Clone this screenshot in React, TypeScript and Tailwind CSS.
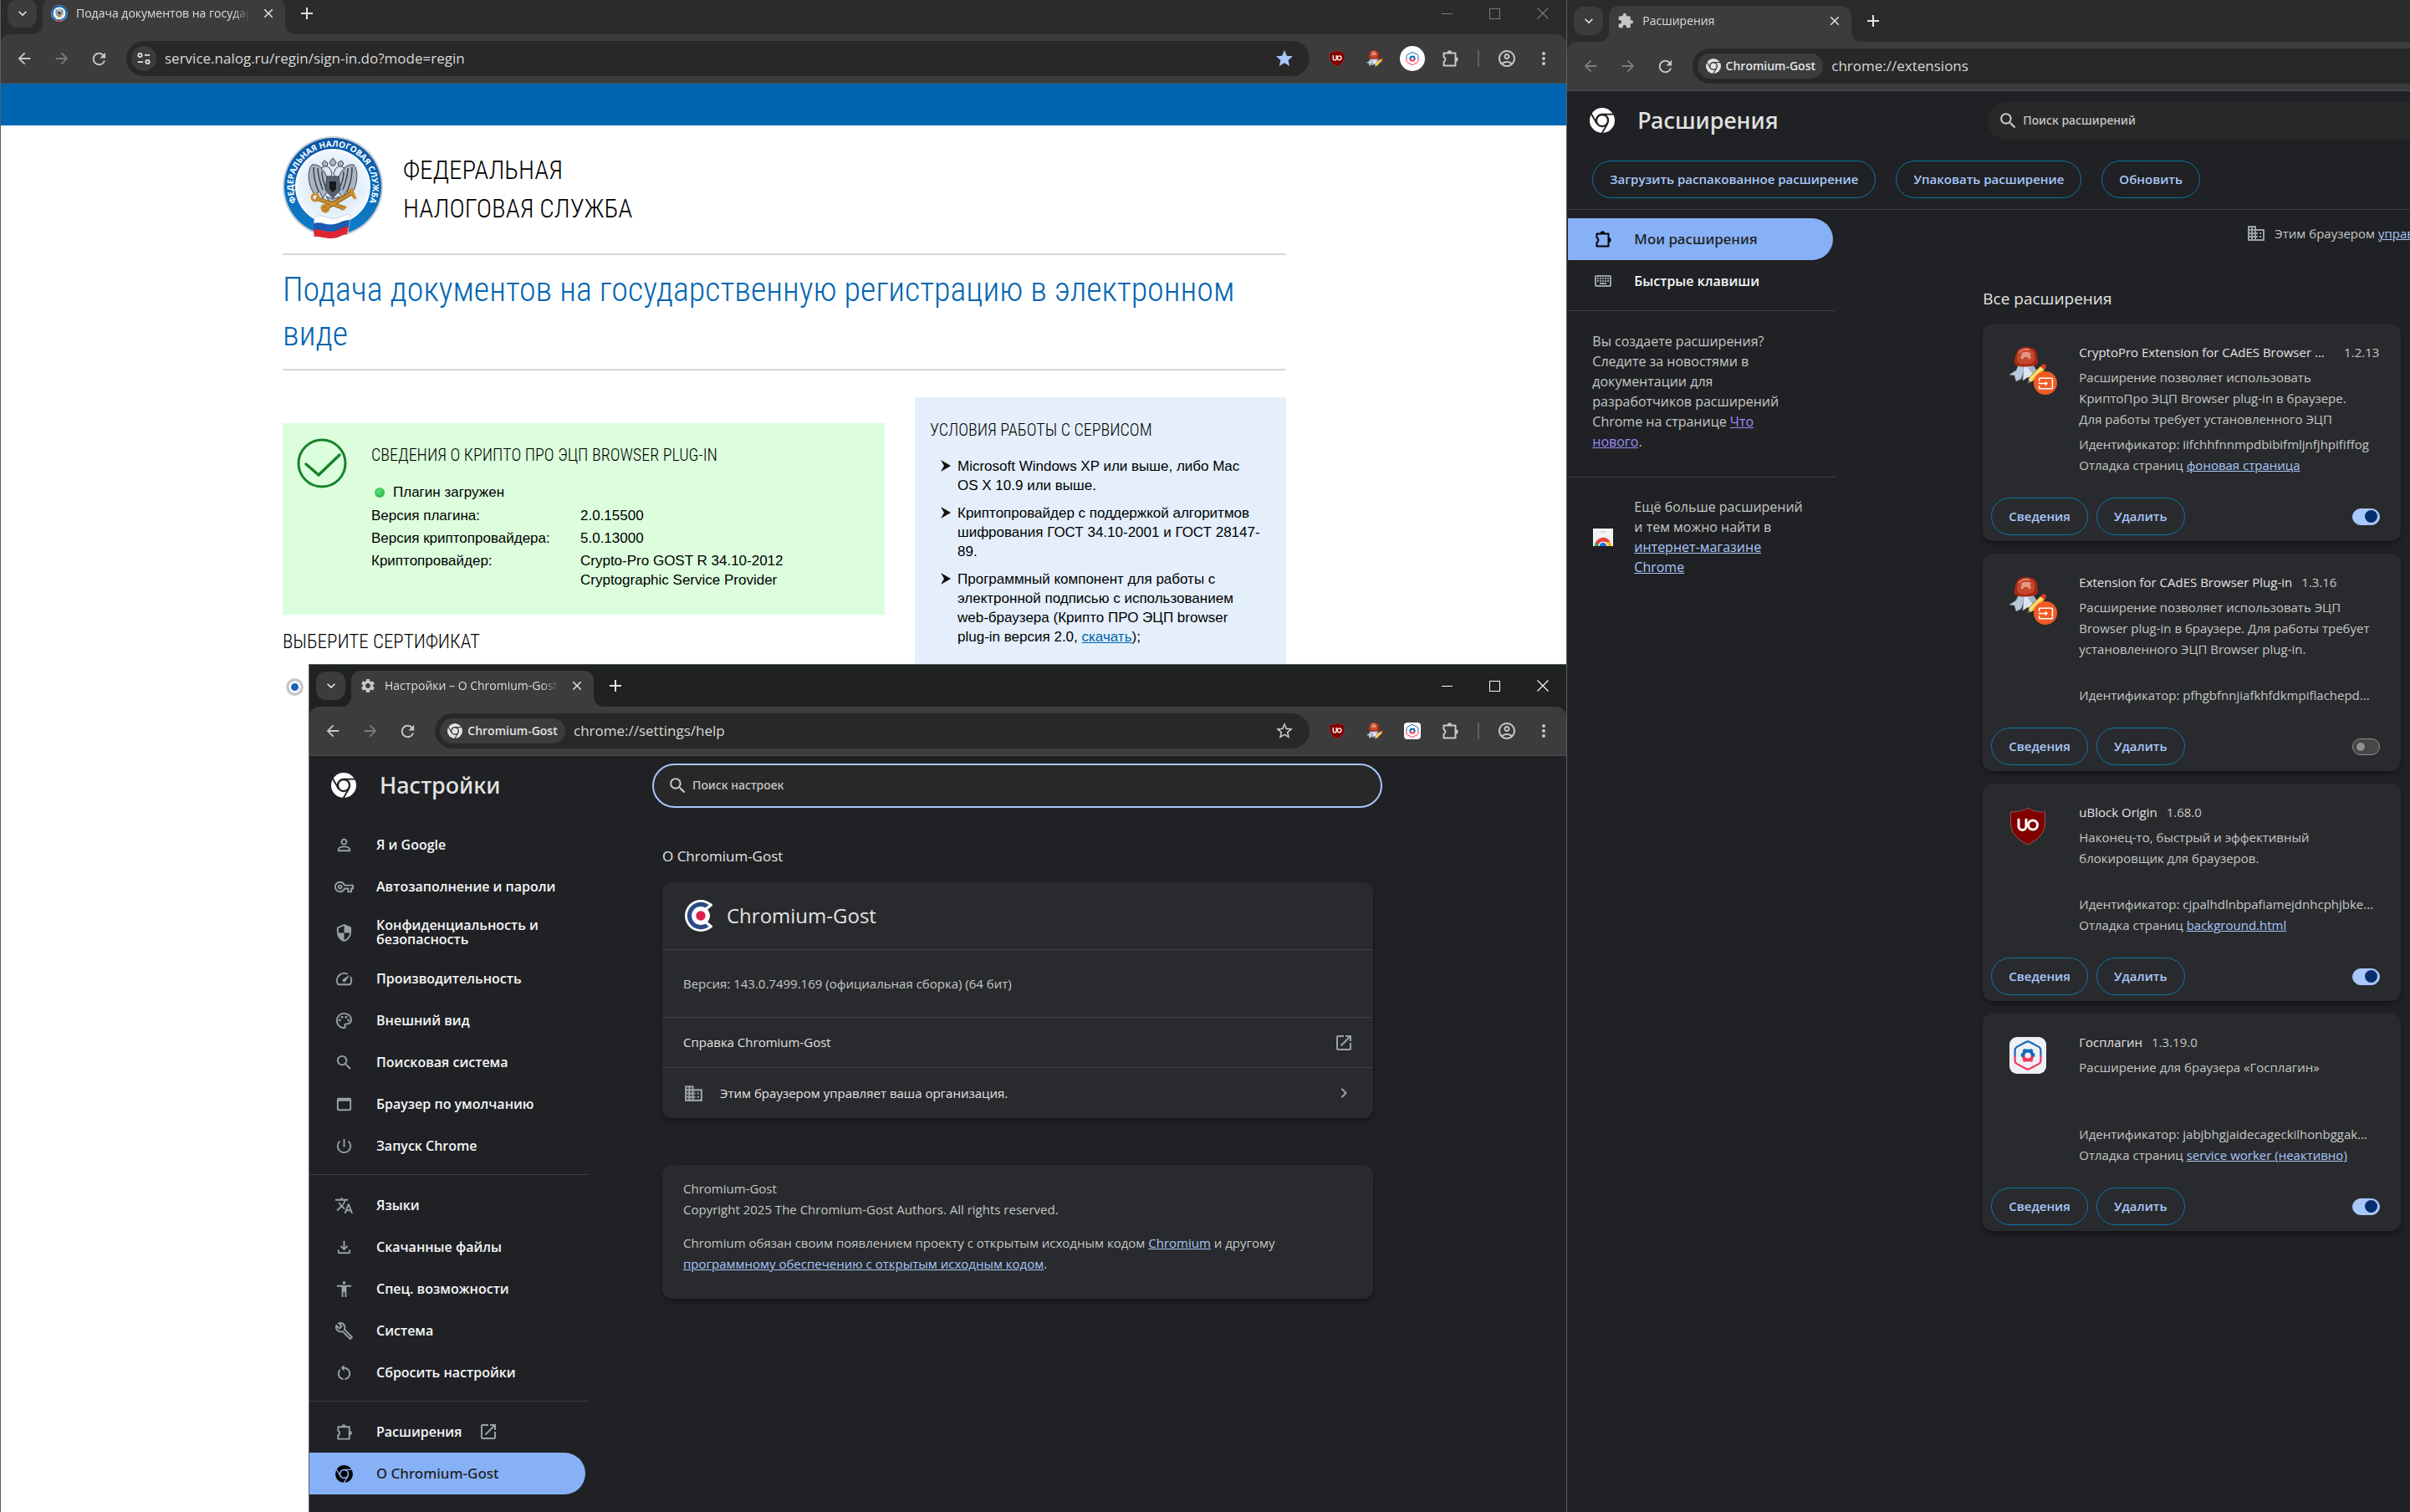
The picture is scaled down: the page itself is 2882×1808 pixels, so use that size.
import React from 'react';
import {
  MdAccessibility,
  MdAdd,
  MdArrowBack,
  MdArrowForward,
  MdBusiness,
  MdChevronRight,
  MdClose,
  MdExtension,
  MdInput,
  MdKeyboardArrowDown,
  MdMoreVert,
  MdOpenInNew,
  MdOutlineAccountCircle,
  MdOutlineBuild,
  MdOutlineFileDownload,
  MdOutlineKeyboard,
  MdOutlinePalette,
  MdOutlineSpeed,
  MdOutlineVpnKey,
  MdOutlineWebAsset,
  MdPersonOutline,
  MdPowerSettingsNew,
  MdRefresh,
  MdRestartAlt,
  MdSearch,
  MdSecurity,
  MdSettings,
  MdStar,
  MdStarBorder,
  MdTranslate,
} from 'react-icons/md';

type IconProps = { className?: string };

/* ---------- drawings ---------- */

function ChromeMark({ className }: IconProps) {
  return (
    <svg viewBox="0 0 24 24" className={className} aria-hidden="true">
      <mask id="chromeBlades" maskUnits="userSpaceOnUse" x="0" y="0" width="24" height="24">
        <circle cx="12" cy="12" r="12" fill="#fff" />
        <circle cx="12" cy="12" r="6.600" fill="#000" />
        <g stroke="#000" strokeWidth="1.500">
          <path d="M12 6.100h12" />
          <path d="M12 6.100h12" transform="rotate(120 12 12)" />
          <path d="M12 6.100h12" transform="rotate(240 12 12)" />
        </g>
        <circle cx="12" cy="12" r="4.700" fill="#fff" />
      </mask>
      <rect width="24" height="24" fill="currentColor" mask="url(#chromeBlades)" />
    </svg>
  );
}

function PuzzleOutline({ className }: IconProps) {
  return (
    <svg viewBox="0 0 24 24" className={className} aria-hidden="true">
      <path
        d="M4.5 5.5h14v15h-14v-4.6a3 3 0 0 0 0-5.6z"
        fill="none"
        stroke="currentColor"
        strokeWidth="2"
        strokeLinejoin="round"
      />
      <path d="M8.8 5a2.7 2.7 0 0 1 5.4 0zM19 10.3a2.7 2.7 0 0 1 0 5.4z" fill="currentColor" />
    </svg>
  );
}

function SiteControls({ className }: IconProps) {
  return (
    <svg viewBox="0 0 20 20" fill="none" stroke="currentColor" strokeWidth="2" className={className} aria-hidden="true">
      <circle cx="5" cy="5.5" r="2.4" />
      <path d="M11 5.5h7M2 14.5h7" />
      <circle cx="15" cy="14.5" r="2.4" />
    </svg>
  );
}

function UblockShield({ className }: IconProps) {
  return (
    <svg viewBox="0 0 44 46" className={className} aria-hidden="true">
      <path
        d="M22 1c6 4 13 5 20.500 5v13c0 12-8 20-20.500 26C9.500 39 1.500 31 1.500 19V6C9 6 16 5 22 1z"
        fill="#800000"
        stroke="#8a5a5a"
        strokeWidth="1"
      />
      <path d="M11 15v8a4.500 4.500 0 0 0 9 0v-8" fill="none" stroke="#fff" strokeWidth="3" strokeLinecap="round" />
      <circle cx="28" cy="21.500" r="5.500" fill="none" stroke="#fff" strokeWidth="3" />
    </svg>
  );
}

function SealIcon({ className }: IconProps) {
  return (
    <svg viewBox="0 0 44 44" className={className} aria-hidden="true">
      <path d="M11 21 8 28 0 33l6 1 2 7 6-3 5-15z" fill="#b9c9dc" stroke="#8394a8" strokeWidth=".6" />
      <path d="M17 22l-1 18 6-4 7 2-1-16z" fill="#dbe6f2" stroke="#8394a8" strokeWidth=".6" />
      <path d="M29 22l6 10-5 3-8-10z" fill="#a3b4c8" />
      <path d="M12 2c5-3 12-2 17 0 3 2 4 5 4 10 1 5 2 7-1 9-5 3-14 3-21 2-4-1-6-3-5-7 1-6 2-11 6-14z" fill="#a52a14" />
      <path d="M13 4c5-2 10-2 14 0 3 2 3 5 3 9 0 3-1 5-3 6-5 2-10 2-14 1-3-1-4-3-4-6 0-4 1-8 4-10z" fill="#c4472c" />
      <path d="M14 8c3-3 9-3 12 0l-2 2 2 2-2 3-2-3h-4l-3 3-2-3 2-2z" fill="#e29a84" />
      <path d="M11 7c2-4 8-5 13-4" fill="none" stroke="#ef9b83" strokeWidth="1.500" />
      <path d="M22 43l2-7L37 23l5 4-13 13z" fill="#f2c73a" stroke="#a67c12" strokeWidth=".8" />
      <path d="M25 38l14-13" stroke="#fbe796" strokeWidth="1.800" />
      <path d="M22 43l2-6 4 3z" fill="#ecd8b0" />
      <path d="M22 43l1-3 2 1.500z" fill="#333" />
      <path d="M37 23l2-2c3-2 6 1 5 3l-2 3z" fill="#d63d2c" />
    </svg>
  );
}

function GosMark({ className }: IconProps) {
  return (
    <svg viewBox="0 0 40 40" className={className} aria-hidden="true">
      <defs>
        <linearGradient id="gos" x1="0" y1="0" x2="0" y2="1">
          <stop offset="0" stopColor="#0c6cb8" />
          <stop offset=".48" stopColor="#2b63ae" />
          <stop offset=".56" stopColor="#e8385f" />
          <stop offset="1" stopColor="#f4365c" />
        </linearGradient>
      </defs>
      <path
        d="M18 5.500a4 4 0 0 1 4 0l10 5.300a4 4 0 0 1 2 3.500v11.400a4 4 0 0 1-2 3.500L22 34.500a4 4 0 0 1-4 0L8 29.200a4 4 0 0 1-2-3.500V14.300a4 4 0 0 1 2-3.500z"
        fill="none"
        stroke="url(#gos)"
        strokeWidth="2"
      />
      <circle cx="20" cy="20" r="5" fill="none" stroke="url(#gos)" strokeWidth="3.500" />
      <path d="M15.500 13.500l2 3M24.500 13.500l-2 3M12.500 19.500h3M24.500 19.500h3" stroke="#0c6cb8" strokeWidth="3.500" />
      <path d="M15.500 26.500l2-3M24.500 26.500l-2-3" stroke="#f4365c" strokeWidth="3.500" />
    </svg>
  );
}

function GostLogo({ className }: IconProps) {
  return (
    <svg viewBox="0 0 40 40" className={className} aria-hidden="true">
      <circle cx="20" cy="20" r="20" fill="#fff" />
      <circle cx="20" cy="20" r="17" fill="#2d4a86" />
      <path d="M20 20 44 -2v44z" fill="#292a2d" />
      <path d="M34 5.500 25 13v14l9 7.500" fill="none" stroke="#fff" strokeWidth="3.500" strokeLinejoin="round" />
      <circle cx="20" cy="20" r="11.500" fill="#fff" />
      <circle cx="20" cy="20" r="6" fill="#dc1f4b" />
    </svg>
  );
}

function StoreIcon({ className }: IconProps) {
  return (
    <svg viewBox="0 0 24 21" className={className} aria-hidden="true">
      <path d="M0 0h24v21H0z" fill="#f1f3f4" />
      <rect x="8" y="3" width="8" height="2" rx="1" fill="#dadce0" />
      <path d="M2 21a10 10 0 0 1 19-4.500H12z" fill="#ea4335" />
      <path d="M12 16.500h9A10 10 0 0 1 22 21H12z" fill="#fbbc04" />
      <path d="M2 21c0-2 .4-3.500 1.300-5L8 21z" fill="#34a853" />
      <circle cx="12" cy="21" r="5.500" fill="#fff" />
      <circle cx="12" cy="21" r="4.300" fill="#1a73e8" />
    </svg>
  );
}

function TaxEmblem({ className, lettered }: IconProps & { lettered?: boolean }) {
  return (
    <svg viewBox="0 0 120 122" className={className} aria-hidden="true">
      <defs>
        <radialGradient id="disc">
          <stop offset="0" stopColor="#cfe0f4" />
          <stop offset="1" stopColor="#edf5fd" />
        </radialGradient>
        <linearGradient id="ring" x1="0" y1="0" x2="0" y2="1">
          <stop offset="0" stopColor="#0b55a6" />
          <stop offset="1" stopColor="#0d7fcb" />
        </linearGradient>
        <path id="ringText" d="M24 91A47.500 47.500 0 1 1 96 91" />
      </defs>
      <circle cx="60" cy="60" r="60" fill="#c9ccd2" />
      <circle cx="60" cy="60" r="58" fill="url(#ring)" />
      <circle cx="60" cy="60" r="45" fill="#fff" />
      <circle cx="60" cy="60" r="43" fill="url(#disc)" />
      {lettered && (
        <text fontFamily="Open Sans, sans-serif" fontSize="10" fontWeight="700" fill="#fff">
          <textPath href="#ringText" startOffset="50%" textAnchor="middle">
            ФЕДЕРАЛЬНАЯ НАЛОГОВАЯ СЛУЖБА
          </textPath>
        </text>
      )}
      <g fill="#aab4c2" stroke="#3b424d" strokeWidth="1">
        <path d="M54 46c-6-9-13-13-19-12-5 6-5 18-1 28l4 8 6-4 4 8 6-8z" />
        <path d="M66 46c6-9 13-13 19-12 5 6 5 18 1 28l-4 8-6-4-4 8-6-8z" />
        <path d="M37 37c0 10 2 20 6 29M42 38c0 9 3 18 6 26M47 42c0 8 2 14 5 20M83 37c0 10-2 20-6 29M78 38c0 9-3 18-6 26M73 42c0 8-2 14-5 20" fill="none" strokeWidth="1.500" />
        <path d="M55 52c-4-5-4-11-9-13l4-4c5 0 8 5 9 10zM65 52c4-5 4-11 9-13l-4-4c-5 0-8 5-9 10z" fill="#dfe5ec" />
        <path d="M60 26l-4 5 2 4h4l2-4zM50 29l-3 3 2 4h4l1-4zM70 29l-4 3 1 4h4l2-4z" />
        <path d="M53 48h14l2 16-9 10-9-10z" fill="#59616d" />
      </g>
      <path d="M56 54h8v9l-4 4-4-4z" fill="#15181d" />
      <path d="M52 72l8 12 8-12-8 3z" fill="#aab4c2" stroke="#3b424d" />
      <g fill="none" stroke="#8a5a10" strokeWidth="5">
        <path d="M40 74l34 12M48 88l34-20" />
      </g>
      <g fill="none" stroke="#c98d2e" strokeWidth="3">
        <path d="M40 74l34 12M48 88l34-20" />
        <circle cx="39" cy="73" r="4" />
        <circle cx="51" cy="86" r="4" />
        <path d="M79 64l7 10M82 62l5 13M70 88l6-4" />
      </g>
      <path d="M38 96c10-4 16 4 26 2s11-6 17-4l-3 22c-8 1-9 5-19 7-9 1-14-4-22-3z" fill="#fff" stroke="#c5ccd6" strokeWidth=".8" />
      <path d="M37 104c10-3 15 3 25 1 8-2 11-5 18-5l-1 9c-7 0-9 4-19 6-9 1-14-3-23-2z" fill="#1b5bb2" />
      <path d="M37 112c9-2 14 3 23 2 9-2 11-6 19-6l-2 9c-7 0-8 4-17 5-9 1-14-3-22-2z" fill="#e02430" />
    </svg>
  );
}

function CheckCircle({ className }: IconProps) {
  return (
    <svg viewBox="0 0 60 60" fill="none" stroke="#16832b" strokeWidth="3" strokeLinecap="round" className={className} aria-hidden="true">
      <circle cx="30" cy="30" r="28" />
      <path d="M11 31l15 13 25-24" strokeWidth="3.500" />
    </svg>
  );
}

function ListArrow({ className }: IconProps) {
  return (
    <svg viewBox="0 0 12 14" fill="#111" className={className} aria-hidden="true">
      <path d="M0 0l12 7-12 7 4-7z" />
    </svg>
  );
}

/* ---------- browser frame ---------- */

type FrameProps = {
  className: string;
  strip: string;
  controlTone?: string;
  tabIcon: React.ReactNode;
  tabTitle: string;
  chip?: boolean;
  url: string;
  starred?: boolean;
  circledGos?: boolean;
  fullBar?: boolean;
  backMuted?: boolean;
  children: React.ReactNode;
};

function BrowserWindow(p: FrameProps) {
  return (
    <section className={`flex flex-col overflow-hidden border-l border-[#566066] ${p.className}`}>
      <header className="shrink-0 bg-[#3c3c3c]">
        <div className="flex h-[50px]">
          <div className={`w-[50px] shrink-0 rounded-br-xl pt-2 pl-2 ${p.strip}`}>
            <button type="button" aria-label="Поиск вкладок" className="flex h-[34px] w-[35px] items-center justify-center rounded-xl bg-[#3c3c3c] text-[#e3e3e3]">
              <MdKeyboardArrowDown className="size-5" />
            </button>
          </div>
          <div className={`w-[290px] shrink-0 pt-[7px] ${p.strip}`}>
            <div className="flex h-full items-center rounded-t-xl bg-[#3c3c3c] pr-2 pb-[7px] pl-2.5">
              <span className="flex size-5 shrink-0 items-center justify-center">{p.tabIcon}</span>
              <span className="ml-2.5 flex-1 overflow-hidden mask-r-from-90% text-sm leading-5 whitespace-nowrap text-[#dedede]">
                {p.tabTitle}
              </span>
              <button type="button" aria-label="Закрыть вкладку" className="ml-2.5 flex size-6 items-center justify-center text-[#e3e3e3]">
                <MdClose className="size-[18px]" />
              </button>
            </div>
          </div>
          <div className={`flex flex-1 justify-between rounded-bl-xl ${p.strip}`}>
            <button type="button" aria-label="Новая вкладка" className="ml-3.5 flex w-6 items-center justify-center text-[#e3e3e3]">
              <MdAdd className="size-6" />
            </button>
            {p.fullBar && (
              <div className={`flex ${p.controlTone}`}>
                <button type="button" aria-label="Свернуть" className="flex w-[57px] items-center justify-center">
                  <span className="h-px w-[13px] bg-current" />
                </button>
                <button type="button" aria-label="Развернуть" className="flex w-[57px] items-center justify-center">
                  <span className="size-[13px] border border-current" />
                </button>
                <button type="button" aria-label="Закрыть" className="flex w-[57px] items-center justify-center">
                  <svg viewBox="0 0 14 14" className="size-3.5" stroke="currentColor" strokeWidth="1.100">
                    <path d="M.5.5l13 13M13.500.5l-13 13" />
                  </svg>
                </button>
              </div>
            )}
          </div>
        </div>
        <div className={p.strip}>
          <div className="flex h-[59px] items-center rounded-t-xl border-b border-[#4a4b4d] bg-[#3c3c3c] pr-[5px] pl-[5px] text-[#c7c7c7]">
            <button type="button" aria-label="Назад" className={`flex w-[45px] justify-center ${p.backMuted ? 'text-[#7c7c7c]' : ''}`}>
              <MdArrowBack className="size-[22px]" />
            </button>
            <button type="button" aria-label="Вперёд" className="flex w-[45px] justify-center text-[#7c7c7c]">
              <MdArrowForward className="size-[22px]" />
            </button>
            <button type="button" aria-label="Обновить" className="flex w-[45px] justify-center">
              <MdRefresh className="size-[23px]" />
            </button>
            <div className="ml-2.5 flex h-[42px] flex-1 items-center rounded-full bg-[#282828] pr-[18px] pl-1.5">
              {p.chip ? (
                <span className="flex h-[30px] w-[150px] shrink-0 items-center justify-center gap-1.5 rounded-full bg-[#3c3c3c] text-sm font-semibold text-[#e3e3e3]">
                  <ChromeMark className="size-[18px]" />
                  Chromium-Gost
                </span>
              ) : (
                <button type="button" aria-label="Сведения о сайте" className="flex size-[30px] shrink-0 items-center justify-center rounded-full bg-[#3c3c3c] text-[#e3e3e3]">
                  <SiteControls className="size-[18px]" />
                </button>
              )}
              <input
                type="text"
                aria-label="Адресная строка"
                defaultValue={p.url}
                className="ml-2.5 min-w-0 flex-1 bg-transparent text-[17px] text-[#d8d8d8] outline-none"
              />
              {p.fullBar && (
                <button type="button" aria-label="Добавить в закладки" className={p.starred ? 'text-[#a8c7fa]' : ''}>
                  {p.starred ? <MdStar className="size-6" /> : <MdStarBorder className="size-6" />}
                </button>
              )}
            </div>
            {p.fullBar && (
              <div className="ml-2.5 flex items-center">
                <button type="button" aria-label="uBlock Origin" className="flex w-[45px] justify-center">
                  <UblockShield className="size-5" />
                </button>
                <button type="button" aria-label="CryptoPro Extension" className="flex w-[45px] justify-center">
                  <SealIcon className="size-5" />
                </button>
                <button type="button" aria-label="Госплагин" className="flex w-[45px] justify-center">
                  {p.circledGos ? (
                    <span className="flex size-[30px] items-center justify-center rounded-full bg-white">
                      <GosMark className="size-5" />
                    </span>
                  ) : (
                    <span className="flex size-5 items-center justify-center rounded bg-white">
                      <GosMark className="size-5" />
                    </span>
                  )}
                </button>
                <button type="button" aria-label="Расширения" className="flex w-[45px] justify-center">
                  <PuzzleOutline className="size-6" />
                </button>
                <span className="mx-[11px] h-5 w-0.5 bg-[#5f5f5f]" />
                <button type="button" aria-label="Профиль" className="flex w-11 justify-center">
                  <MdOutlineAccountCircle className="size-6" />
                </button>
                <button type="button" aria-label="Меню" className="flex w-11 justify-center">
                  <MdMoreVert className="size-6" />
                </button>
              </div>
            )}
          </div>
        </div>
      </header>
      {p.children}
    </section>
  );
}

/* ---------- tax service page ---------- */

const heading = "font-['Roboto_Condensed','Liberation_Sans',sans-serif] font-light";

function TaxPage() {
  return (
    <div className="flex-1 bg-white font-['Liberation_Sans',Arial,sans-serif] text-[17px] leading-[23px] text-black">
      <div className="h-[50px] bg-[#0065b1]" />
      <div className="ml-[337px] w-[1200px]">
        <div className="flex items-center gap-6 border-b-2 border-[#d3d9df] pt-[13px] pb-[18px]">
          <TaxEmblem lettered className="h-[122px] w-[120px]" />
          <p className={`pt-1.5 text-[31px] leading-[46px] ${heading}`}>
            ФЕДЕРАЛЬНАЯ
            <br />
            НАЛОГОВАЯ СЛУЖБА
          </p>
        </div>
        <h1 className={`border-b-2 border-[#d3d9df] py-[15px] text-[40px] leading-[53px] text-[#0065b1] ${heading}`}>
          Подача документов на государственную регистрацию в электронном виде
        </h1>
        <div className="flex items-start gap-9">
          <div className="mt-[63px] w-[720px]">
            <div className="flex h-[229px] bg-[#dcfedd] pt-[18px] pl-[17px]">
              <CheckCircle className="size-[60px] shrink-0" />
              <div className="ml-[29px]">
                <h2 className={`pt-1.5 text-[20px] leading-7 ${heading}`}>СВЕДЕНИЯ О КРИПТО ПРО ЭЦП BROWSER PLUG-IN</h2>
                <p className="mt-[19px] flex items-center gap-2.5 pl-1">
                  <span className="size-3 rounded-full bg-[radial-gradient(circle_at_40%_35%,#5be07c,#18a838)]" />
                  Плагин загружен
                </p>
                <dl className="mt-[5px] grid grid-cols-[250px_1fr] gap-y-[4px]">
                  <dt>Версия плагина:</dt>
                  <dd>2.0.15500</dd>
                  <dt>Версия криптопровайдера:</dt>
                  <dd>5.0.13000</dd>
                  <dt>Криптопровайдер:</dt>
                  <dd>
                    Crypto-Pro GOST R 34.10-2012
                    <br />
                    Cryptographic Service Provider
                  </dd>
                </dl>
              </div>
            </div>
            <h2 className={`mt-[15px] text-[23px] leading-[36px] ${heading}`}>ВЫБЕРИТЕ СЕРТИФИКАТ</h2>
            <input
              type="radio"
              name="certificate"
              aria-label="Сертификат"
              defaultChecked
              className="mt-[25px] ml-1 block size-[21px] appearance-none rounded-full border-[3px] border-[#c9c9c9] bg-white shadow-[inset_0_0_0_3px_white] checked:bg-[#1a67b5]"
            />
          </div>
          <aside className="mt-8 h-[900px] w-[444px] bg-[#e4effb] px-[18px] pt-[22px]">
            <h2 className={`text-[20px] leading-[34px] ${heading}`}>УСЛОВИЯ РАБОТЫ С СЕРВИСОМ</h2>
            <ul className="mt-[15px] w-[397px] space-y-2.5 pl-[13px]">
              <li className="flex gap-2">
                <ListArrow className="mt-1 h-3.5 w-3 shrink-0" />
                <span>Microsoft Windows XP или выше, либо Mac OS X 10.9 или выше.</span>
              </li>
              <li className="flex gap-2">
                <ListArrow className="mt-1 h-3.5 w-3 shrink-0" />
                <span>
                  Криптопровайдер с поддержкой алгоритмов шифрования ГОСТ 34.10-2001 и ГОСТ 28147-
                  <br />
                  89.
                </span>
              </li>
              <li className="flex gap-2">
                <ListArrow className="mt-1 h-3.5 w-3 shrink-0" />
                <span>
                  Программный компонент для работы с электронной подписью с использованием web-браузера (Крипто ПРО ЭЦП
                  browser plug-in версия 2.0,{' '}
                  <a href="#download" className="text-[#0065b1] underline">
                    скачать
                  </a>
                  );
                </span>
              </li>
            </ul>
          </aside>
        </div>
      </div>
    </div>
  );
}

/* ---------- settings page ---------- */

const medium = "font-['Noto_Sans',sans-serif] font-medium";

const mainNav = [
  { label: 'Я и Google', Icon: MdPersonOutline },
  { label: 'Автозаполнение и пароли', Icon: MdOutlineVpnKey },
  { label: 'Конфиденциальность и безопасность', Icon: MdSecurity, tall: true },
  { label: 'Производительность', Icon: MdOutlineSpeed },
  { label: 'Внешний вид', Icon: MdOutlinePalette },
  { label: 'Поисковая система', Icon: MdSearch },
  { label: 'Браузер по умолчанию', Icon: MdOutlineWebAsset },
  { label: 'Запуск Chrome', Icon: MdPowerSettingsNew },
];

const extraNav = [
  { label: 'Языки', Icon: MdTranslate },
  { label: 'Скачанные файлы', Icon: MdOutlineFileDownload },
  { label: 'Спец. возможности', Icon: MdAccessibility },
  { label: 'Система', Icon: MdOutlineBuild },
  { label: 'Сбросить настройки', Icon: MdRestartAlt },
];

function NavItem({ label, Icon, tall }: { label: string; Icon: React.ComponentType<IconProps>; tall?: boolean }) {
  return (
    <a href="#section" className={`flex items-center pl-[30px] ${tall ? 'h-[60px]' : 'h-[50px]'}`}>
      <Icon className="size-[23px] shrink-0 text-[#9aa0a6]" />
      <span className={`ml-[27px] text-base font-semibold text-[#f5f6f7] ${tall ? 'w-52 leading-[17px]' : ''}`}>{label}</span>
    </a>
  );
}

function SettingsPage() {
  return (
    <div className="flex-1 bg-[#202124] text-[#e3e3e3]">
      <div className="flex h-[70px] items-center pl-[26px]">
        <ChromeMark className="size-[30px] text-white" />
        <h1 className={`ml-7 w-[326px] text-[27px] leading-9 ${medium}`}>Настройки</h1>
        <label className="flex h-[53px] w-[873px] items-center rounded-full border-2 border-[#a8c7fa] bg-[#282828] pl-4">
          <MdSearch className="size-[25px] text-[#c7c7c7]" />
          <input
            type="search"
            aria-label="Поиск настроек"
            placeholder="Поиск настроек"
            className={`ml-[5px] flex-1 bg-transparent text-sm outline-none placeholder:text-[#c7c7c7] ${medium}`}
          />
        </label>
      </div>
      <div className="flex">
        <nav className="w-[333px] shrink-0 pt-[11px]">
          {mainNav.map((n) => (
            <NavItem key={n.label} {...n} />
          ))}
          <hr className="mt-[9px] mb-[11px] border-[#3c4043]" />
          {extraNav.map((n) => (
            <NavItem key={n.label} {...n} />
          ))}
          <hr className="mt-[9px] mb-[11px] border-[#3c4043]" />
          <a href="#extensions" className="flex h-[50px] items-center pl-[30px]">
            <PuzzleOutline className="size-[23px] text-[#9aa0a6]" />
            <span className="ml-[27px] text-base font-semibold text-[#f5f6f7]">Расширения</span>
            <MdOpenInNew className="ml-5 size-6 text-[#9aa0a6]" />
          </a>
          <a href="#about" className="flex h-[50px] w-[330px] items-center rounded-r-full bg-[#87b1f6] pl-[31px] text-[#202124]">
            <ChromeMark className="size-[21px] text-black" />
            <span className={`ml-7 text-[17px] ${medium}`}>О Chromium-Gost</span>
          </a>
        </nav>
        <main className="ml-[89px] w-[850px] pt-[38px]">
          <h2 className="text-[17px] leading-6">О Chromium-Gost</h2>
          <div className="mt-[19px] divide-y divide-[#3f4145] rounded-xl bg-[#292a2d] shadow-md shadow-black/30">
            <div className="flex h-[81px] items-center pl-[27px]">
              <GostLogo className="size-[38px]" />
              <span className="ml-3 text-2xl">Chromium-Gost</span>
            </div>
            <p className="flex h-[81px] items-center pl-[25px] text-[15px] text-[#c4c7c5]">
              Версия: 143.0.7499.169 (официальная сборка) (64 бит)
            </p>
            <a href="#help" className="flex h-[60px] items-center justify-between pr-[23px] pl-[25px] text-[15px]">
              Справка Chromium-Gost
              <MdOpenInNew className="size-6 text-[#9aa0a6]" />
            </a>
            <a href="#management" className="flex h-[60px] items-center pr-[23px] pl-[25px] text-[15px]">
              <MdBusiness className="size-[25px] text-[#9aa0a6]" />
              <span className="ml-[19px] flex-1">Этим браузером управляет ваша организация.</span>
              <MdChevronRight className="size-6 text-[#9aa0a6]" />
            </a>
          </div>
          <div className="mt-14 h-40 rounded-xl bg-[#292a2d] pt-4 pl-[25px] text-[15px] leading-[25px] text-[#c4c7c5] shadow-md shadow-black/30">
            <p>
              Chromium-Gost
              <br />
              Copyright 2025 The Chromium-Gost Authors. All rights reserved.
            </p>
            <p className="mt-[15px] w-[750px]">
              Chromium обязан своим появлением проекту с открытым исходным кодом{' '}
              <a href="#chromium" className="text-[#a8c7fa] underline">
                Chromium
              </a>{' '}
              и другому{' '}
              <a href="#oss" className="text-[#a8c7fa] underline">
                программному обеспечению с открытым исходным кодом
              </a>
              .
            </p>
          </div>
        </main>
      </div>
    </div>
  );
}

/* ---------- extensions page ---------- */

type Ext = {
  name: string;
  long?: boolean;
  version: string;
  description: string;
  id: string;
  view?: string;
  on: boolean;
  badge?: boolean;
  icon: React.ReactNode;
};

const extensions: Ext[] = [
  {
    name: 'CryptoPro Extension for CAdES Browser ...',
    long: true,
    version: '1.2.13',
    description: 'Расширение позволяет использовать КриптоПро ЭЦП Browser plug-in в браузере. Для\u00a0работы требует установленного ЭЦП',
    id: 'iifchhfnnmpdbibifmljnfjhpififfog',
    view: 'фоновая страница',
    on: true,
    badge: true,
    icon: <SealIcon className="size-11" />,
  },
  {
    name: 'Extension for CAdES Browser Plug-in',
    version: '1.3.16',
    description: 'Расширение позволяет использовать ЭЦП Browser plug-in в браузере. Для работы требует установленного ЭЦП Browser plug-in.',
    id: 'pfhgbfnnjiafkhfdkmpiflachepd...',
    on: false,
    badge: true,
    icon: <SealIcon className="size-11" />,
  },
  {
    name: 'uBlock Origin',
    version: '1.68.0',
    description: 'Наконец-то, быстрый и эффективный блокировщик для браузеров.',
    id: 'cjpalhdlnbpafiamejdnhcphjbke...',
    view: 'background.html',
    on: true,
    icon: <UblockShield className="h-[46px] w-11" />,
  },
  {
    name: 'Госплагин',
    version: '1.3.19.0',
    description: 'Расширение для браузера «Госплагин»',
    id: 'jabjbhgjaidecageckilhonbggak...',
    view: 'service worker (неактивно)',
    on: true,
    icon: (
      <span className="flex size-11 items-center justify-center rounded-[9px] bg-[#eef0f6]">
        <GosMark className="size-11" />
      </span>
    ),
  },
];

const pill = 'h-[45px] rounded-full border border-[#0b76a8] px-5 text-[15px] font-semibold whitespace-nowrap text-[#a8c7fa]';

function ExtensionCard({ ext }: { ext: Ext }) {
  return (
    <article className="flex h-[260px] w-[500px] flex-col justify-between rounded-xl bg-[#292a2d] pt-[22px] pb-[7px] shadow-md shadow-black/30">
      <div className="flex pl-8">
        <div className="relative mt-1.5 h-[58px] w-[83px] shrink-0">
          {ext.icon}
          {ext.badge && (
            <span className="absolute top-[29px] left-[29px] flex size-7 items-center justify-center rounded-full bg-[#f25a24] text-white">
              <MdInput className="size-[19px]" />
            </span>
          )}
        </div>
        <div className="w-[359px] text-[15px] leading-[25px] text-[#c4c7c5]">
          <h3 className={`flex leading-6 ${ext.long ? 'justify-between' : 'gap-[11px]'}`}>
            <span className="text-[#e3e3e3]">{ext.name}</span>
            <span>{ext.version}</span>
          </h3>
          <p className="mt-1.5 h-[75px]">{ext.description}</p>
          <div className="mt-[5px] flex h-[50px] flex-col justify-end whitespace-nowrap">
            <p>Идентификатор: {ext.id}</p>
            {ext.view && (
              <p>
                Отладка страниц{' '}
                <a href="#inspect" className="text-[#a8c7fa] underline">
                  {ext.view}
                </a>
              </p>
            )}
          </div>
        </div>
      </div>
      <div className="flex items-center gap-2.5 pr-[25px] pl-2.5">
        <button type="button" className={pill}>
          Сведения
        </button>
        <button type="button" className={pill}>
          Удалить
        </button>
        <input
          type="checkbox"
          role="switch"
          aria-label={`Включить ${ext.name}`}
          defaultChecked={ext.on}
          className="ml-auto flex h-5 w-[33px] appearance-none items-center rounded-full border border-[#8e918f] bg-[#444746] px-1 before:size-2.5 before:rounded-full before:bg-[#8e918f] checked:justify-end checked:border-[#a8c7fa] checked:bg-[#a8c7fa] checked:px-0.5 checked:before:size-[15px] checked:before:bg-[#062e6f]"
        />
      </div>
    </article>
  );
}

function ExtensionsPage() {
  return (
    <div className="flex-1 bg-[#202124] pl-px text-[#e3e3e3]">
      <div className="flex h-[70px] items-center pl-[26px]">
        <ChromeMark className="size-[30px] text-white" />
        <h1 className={`ml-[27px] w-[419px] text-[27px] leading-9 ${medium}`}>Расширения</h1>
        <label className="flex h-[45px] w-[873px] items-center rounded-full bg-[#282828] pl-3">
          <MdSearch className="size-[25px] text-[#c7c7c7]" />
          <input
            type="search"
            aria-label="Поиск расширений"
            placeholder="Поиск расширений"
            className={`ml-[5px] flex-1 bg-transparent text-sm outline-none placeholder:text-[#c7c7c7] ${medium}`}
          />
        </label>
      </div>
      <div className="flex gap-6 border-b border-[#3c4043] pt-[13px] pb-[13px] pl-[29px]">
        <button type="button" className={pill}>
          Загрузить распакованное расширение
        </button>
        <button type="button" className={pill}>
          Упаковать расширение
        </button>
        <button type="button" className={pill}>
          Обновить
        </button>
      </div>
      <div className="flex">
        <nav className="w-80 shrink-0 pt-2.5 text-base leading-6 text-[#c4c7c5]">
          <a href="#extensions" className="flex h-[50px] w-[317px] items-center rounded-r-full bg-[#87b1f6] pl-[30px] text-[#202124]">
            <PuzzleOutline className="size-6 text-black" />
            <span className={`ml-[25px] text-[17px] ${medium}`}>Мои расширения</span>
          </a>
          <a href="#shortcuts" className="flex h-[50px] items-center pl-[30px]">
            <MdOutlineKeyboard className="size-6 text-[#9aa0a6]" />
            <span className="ml-[25px] font-semibold text-[#f5f6f7]">Быстрые клавиши</span>
          </a>
          <hr className="mt-2.5 border-[#3c4043]" />
          <p className="w-[280px] py-6 pl-[29px]">
            Вы создаете расширения? Следите за новостями в документации для разработчиков расширений Chrome на странице{' '}
            <a href="#new" className="text-[#9a8cf5] underline">
              Что
              <br />
              нового
            </a>
            .
          </p>
          <hr className="mt-1.5 border-[#3c4043]" />
          <div className="flex items-center pt-[23px] pl-[30px]">
            <StoreIcon className="h-[21px] w-6 shrink-0" />
            <p className="ml-[25px] w-[208px]">
              Ещё больше расширений и тем можно найти в{' '}
              <a href="#store" className="text-[#a8c7fa] underline">
                интернет-магазине Chrome
              </a>
            </p>
          </div>
        </nav>
        <main className="ml-[176px] pt-4">
          <p className="ml-[315px] flex h-6 items-center text-[15px] whitespace-nowrap text-[#c4c7c5]">
            <MdBusiness className="mr-2.5 size-6 text-[#9aa0a6]" />
            Этим браузером&nbsp;
            <a href="#management" className="text-[#a8c7fa] underline">
              управляет
            </a>
          </p>
          <h2 className="mt-[54px] mb-[18px] text-[19px] leading-6">Все расширения</h2>
          <div className="flex flex-col gap-[15px]">
            {extensions.map((e) => (
              <ExtensionCard key={e.id} ext={e} />
            ))}
          </div>
        </main>
      </div>
    </div>
  );
}

/* ---------- desktop ---------- */

export default function App() {
  return (
    <div className="relative h-screen overflow-hidden bg-[#202124] font-['Open_Sans','Noto_Sans',sans-serif]">
      <BrowserWindow
        className="absolute -top-[9px] right-[35%] bottom-0 left-0"
        strip="bg-[#2b2b2b]"
        controlTone="text-[#7c7c7c]"
        tabIcon={<TaxEmblem className="size-5" />}
        tabTitle="Подача документов на государственную регистрацию"
        url="service.nalog.ru/regin/sign-in.do?mode=regin"
        starred
        circledGos
        fullBar
      >
        <TaxPage />
      </BrowserWindow>
      <BrowserWindow
        className="absolute -top-px bottom-0 left-[65%] w-[1420px] border-t"
        strip="bg-[#2b2b2b]"
        tabIcon={<MdExtension className="size-5 text-[#c7c7c7]" />}
        tabTitle="Расширения"
        chip
        backMuted
        url="chrome://extensions"
      >
        <ExtensionsPage />
      </BrowserWindow>
      <BrowserWindow
        className="absolute top-[794px] right-[35%] bottom-0 left-[369px] border-t"
        strip="bg-[#202221]"
        controlTone="text-white"
        tabIcon={<MdSettings className="size-[22px] text-[#c7c7c7]" />}
        tabTitle="Настройки – О Chromium-Gost"
        chip
        url="chrome://settings/help"
        fullBar
      >
        <SettingsPage />
      </BrowserWindow>
    </div>
  );
}
